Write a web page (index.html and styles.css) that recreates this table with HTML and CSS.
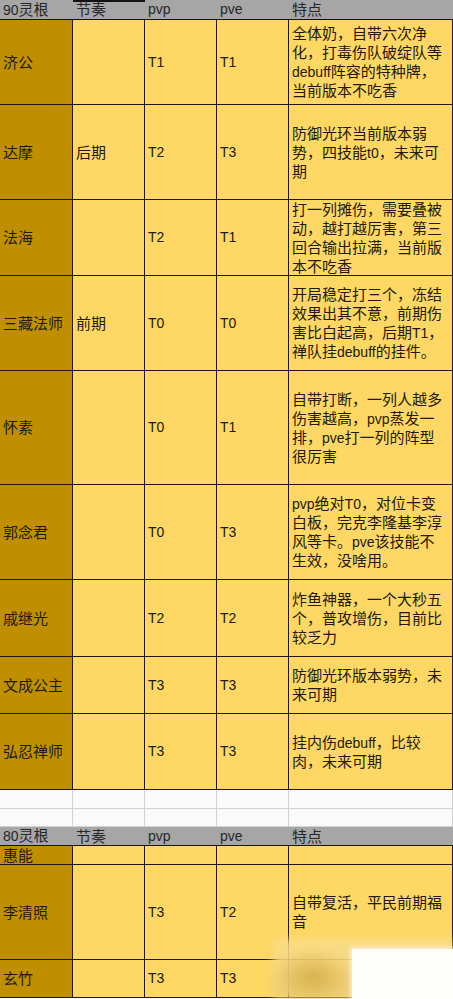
FILE: index.html
```html
<!DOCTYPE html>
<html lang="zh-CN">
<head>
<meta charset="utf-8">
<title>灵根表</title>
<link rel="stylesheet" href="styles.css">
</head>
<body>
<div class="sheet">
  <div class="row head h20">
    <div class="c"><span>90<span class="cn">灵根</span></span></div>
    <div class="c sel"><span class="cn">节奏</span></div>
    <div class="c"><span>pvp</span></div>
    <div class="c"><span>pve</span></div>
    <div class="c"><span class="cn">特点</span></div>
  </div>

  <div class="row h85">
    <div class="c nm"><span class="cn">济公</span></div>
    <div class="c y"></div>
    <div class="c y"><span>T1</span></div>
    <div class="c y"><span>T1</span></div>
    <div class="c y d">
      <div class="ln cn">全体奶，自带六次净</div>
      <div class="ln cn">化，打毒伤队破绽队等</div>
      <div class="ln cn"><span class="en">debuff</span>阵容的特种牌，</div>
      <div class="ln cn">当前版本不吃香</div>
    </div>
  </div>

  <div class="row h95">
    <div class="c nm"><span class="cn">达摩</span></div>
    <div class="c y"><span class="cn">后期</span></div>
    <div class="c y"><span>T2</span></div>
    <div class="c y"><span>T3</span></div>
    <div class="c y d">
      <div class="ln cn">防御光环当前版本弱</div>
      <div class="ln cn">势，四技能<span class="en">t0</span>，未来可</div>
      <div class="ln cn">期</div>
    </div>
  </div>

  <div class="row h76">
    <div class="c nm"><span class="cn">法海</span></div>
    <div class="c y"></div>
    <div class="c y"><span>T2</span></div>
    <div class="c y"><span>T1</span></div>
    <div class="c y d">
      <div class="ln cn">打一列摊伤，需要叠被</div>
      <div class="ln cn">动，越打越厉害，第三</div>
      <div class="ln cn">回合输出拉满，当前版</div>
      <div class="ln cn">本不吃香</div>
    </div>
  </div>

  <div class="row h95">
    <div class="c nm"><span class="cn">三藏法师</span></div>
    <div class="c y"><span class="cn">前期</span></div>
    <div class="c y"><span>T0</span></div>
    <div class="c y"><span>T0</span></div>
    <div class="c y d">
      <div class="ln cn">开局稳定打三个，冻结</div>
      <div class="ln cn">效果出其不意，前期伤</div>
      <div class="ln cn">害比白起高，后期<span class="en">T1</span>，</div>
      <div class="ln cn">禅队挂<span class="en">debuff</span>的挂件。</div>
    </div>
  </div>

  <div class="row h114">
    <div class="c nm"><span class="cn">怀素</span></div>
    <div class="c y"></div>
    <div class="c y"><span>T0</span></div>
    <div class="c y"><span>T1</span></div>
    <div class="c y d">
      <div class="ln cn">自带打断，一列人越多</div>
      <div class="ln cn">伤害越高，<span class="en">pvp</span>蒸发一</div>
      <div class="ln cn">排，<span class="en">pve</span>打一列的阵型</div>
      <div class="ln cn">很厉害</div>
    </div>
  </div>

  <div class="row h95">
    <div class="c nm"><span class="cn">郭念君</span></div>
    <div class="c y"></div>
    <div class="c y"><span>T0</span></div>
    <div class="c y"><span>T3</span></div>
    <div class="c y d">
      <div class="ln cn"><span class="en">pvp</span>绝对<span class="en">T0</span>，对位卡变</div>
      <div class="ln cn">白板，完克李隆基李淳</div>
      <div class="ln cn">风等卡。<span class="en">pve</span>该技能不</div>
      <div class="ln cn">生效，没啥用。</div>
    </div>
  </div>

  <div class="row h77">
    <div class="c nm"><span class="cn">戚继光</span></div>
    <div class="c y"></div>
    <div class="c y"><span>T2</span></div>
    <div class="c y"><span>T2</span></div>
    <div class="c y d">
      <div class="ln cn">炸鱼神器，一个大秒五</div>
      <div class="ln cn">个，普攻增伤，目前比</div>
      <div class="ln cn">较乏力</div>
    </div>
  </div>

  <div class="row h57">
    <div class="c nm"><span class="cn">文成公主</span></div>
    <div class="c y"></div>
    <div class="c y"><span>T3</span></div>
    <div class="c y"><span>T3</span></div>
    <div class="c y d">
      <div class="ln cn">防御光环版本弱势，未</div>
      <div class="ln cn">来可期</div>
    </div>
  </div>

  <div class="row h76">
    <div class="c nm"><span class="cn">弘忍禅师</span></div>
    <div class="c y"></div>
    <div class="c y"><span>T3</span></div>
    <div class="c y"><span>T3</span></div>
    <div class="c y d">
      <div class="ln cn">挂内伤<span class="en">debuff</span>，比较</div>
      <div class="ln cn">肉，未来可期</div>
    </div>
  </div>

  <div class="row blank h19">
    <div class="c"></div><div class="c"></div><div class="c"></div><div class="c"></div><div class="c"></div>
  </div>
  <div class="row blank h18">
    <div class="c"></div><div class="c"></div><div class="c"></div><div class="c"></div><div class="c"></div>
  </div>

  <div class="row head h19">
    <div class="c"><span>80<span class="cn">灵根</span></span></div>
    <div class="c"><span class="cn">节奏</span></div>
    <div class="c"><span>pvp</span></div>
    <div class="c"><span>pve</span></div>
    <div class="c"><span class="cn">特点</span></div>
  </div>

  <div class="row h19">
    <div class="c nm"><span class="cn">惠能</span></div>
    <div class="c y"></div>
    <div class="c y"></div>
    <div class="c y"></div>
    <div class="c y"></div>
  </div>

  <div class="row h95">
    <div class="c nm"><span class="cn">李清照</span></div>
    <div class="c y"></div>
    <div class="c y"><span>T3</span></div>
    <div class="c y"><span>T2</span></div>
    <div class="c y d">
      <div class="ln cn">自带复活，平民前期福</div>
      <div class="ln cn">音</div>
    </div>
  </div>

  <div class="row h38">
    <div class="c nm"><span class="cn">玄竹</span></div>
    <div class="c y"></div>
    <div class="c y"><span>T3</span></div>
    <div class="c y"><span>T3</span></div>
    <div class="c y d"></div>
  </div>
</div>

<div class="mark">
  <div class="blur"></div>
  <div class="box"></div>
</div>
</body>
</html>
```

FILE: styles.css
```css
html, body {
  margin: 0;
  padding: 0;
  background: #ffffff;
}

body {
  width: 453px;
  height: 999px;
  overflow: hidden;
  position: relative;
  font-family: "Liberation Sans", "Noto Sans CJK SC", sans-serif;
  font-size: 14px;
  color: #221a06;
}

.sheet {
  display: flex;
  flex-direction: column;
}

.row {
  display: grid;
  grid-template-columns: 73px 72px 72px 72px 164px;
}

.h18 { height: 18px; }
.h19 { height: 19px; }
.h20 { height: 20px; }
.h38 { height: 38px; }
.h57 { height: 57px; }
.h76 { height: 76px; }
.h77 { height: 77px; }
.h85 { height: 85px; }
.h95 { height: 95px; }
.h114 { height: 114px; }

.c {
  box-sizing: border-box;
  display: flex;
  align-items: center;
  padding-left: 3px;
  line-height: 19px;
  white-space: nowrap;
  overflow: hidden;
  border-right: 1px solid #24180a;
  border-bottom: 1px solid #24180a;
}

.c.d {
  flex-direction: column;
  align-items: flex-start;
  justify-content: center;
}

.c.nm {
  background: #c08f00;
}

.c.y {
  background: #fed764;
}

.cn {
  font-size: 15px;
}

.en {
  font-size: 14px;
}

.ln {
  height: 19px;
  line-height: 19px;
  white-space: nowrap;
}

/* header rows */
.head .c {
  background: #a6a6a6;
  border-right: none;
  border-bottom: 1px solid #1c1408;
  color: #262626;
}

.head .sel {
  box-shadow: inset 0 2px 0 #121212;
}

/* blank rows */
.blank .c {
  background: #fafafa;
  border-right: 1px solid #d2d2d2;
  border-bottom: 1px solid #d2d2d2;
}

/* watermark overlay */
.mark {
  position: absolute;
  left: 273px;
  top: 939px;
  width: 180px;
  height: 60px;
}

.mark .blur {
  position: absolute;
  inset: 0;
  background:
    radial-gradient(ellipse 40px 28px at 40px 38px, rgba(214, 172, 70, 0.9), rgba(214, 172, 70, 0) 100%),
    linear-gradient(180deg, rgba(250, 222, 140, 0.85), rgba(236, 206, 120, 0.95));
  filter: blur(4px);
}

.mark .box {
  position: absolute;
  left: 79px;
  top: 10px;
  width: 101px;
  height: 50px;
  background: #fdfdfc;
  box-shadow: 0 0 4px 2px rgba(255, 255, 255, 0.6);
}
```
